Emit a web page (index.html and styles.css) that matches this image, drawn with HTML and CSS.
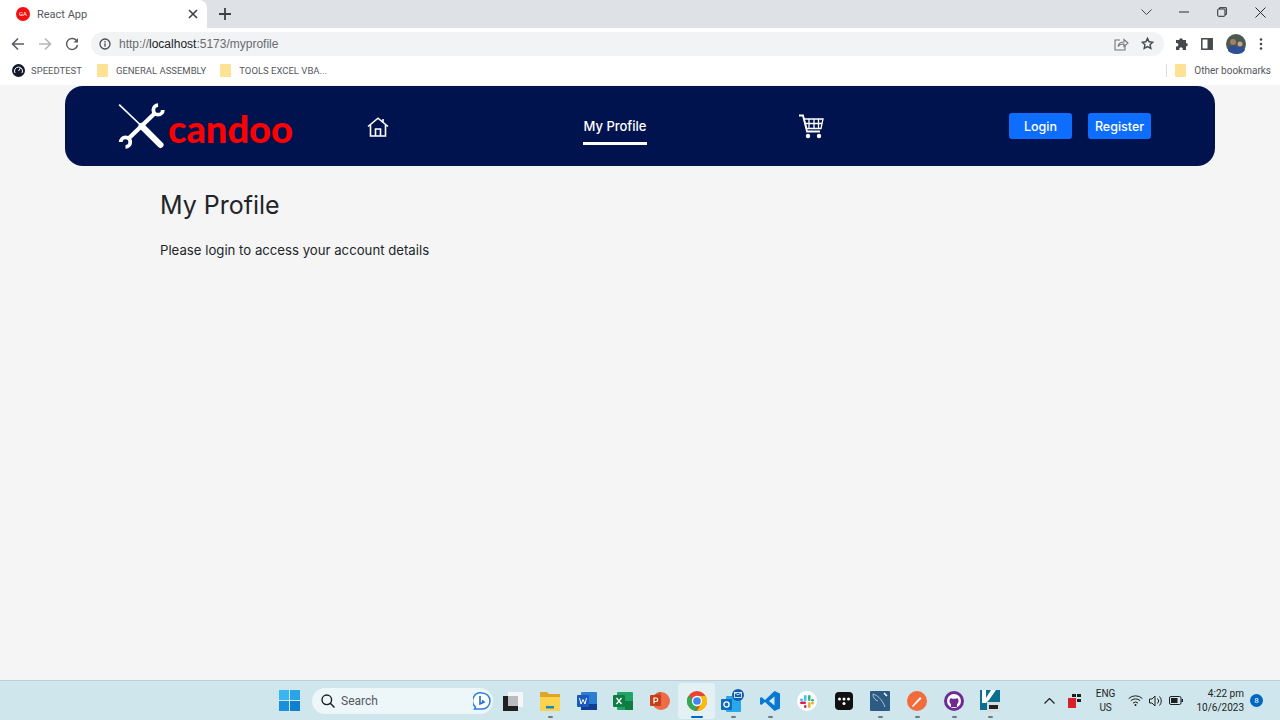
FILE: index.html
```html
<!DOCTYPE html>
<html lang="en">
<head>
  <meta charset="UTF-8">
  <meta name="viewport" content="width=device-width, initial-scale=1.0">
  <title>React App</title>
  <link rel="stylesheet" href="styles.css">
</head>
<body>
  <!-- Tab strip -->
  <div class="tabstrip">
    <div class="tab">
      <span class="favicon">GA</span>
      <span class="tab-title">React App</span>
      <svg class="tab-close" width="10" height="10" viewBox="0 0 10 10"><path d="M1 1l8 8M9 1l-8 8" stroke="#3c4043" stroke-width="1.6"/></svg>
    </div>
    <svg class="new-tab" width="12" height="12" viewBox="0 0 12 12"><path d="M6 0v12M0 6h12" stroke="#3c4043" stroke-width="1.8"/></svg>
    <div class="window-controls">
      <svg class="win-chevron" width="11" height="6" viewBox="0 0 11 6"><path d="M.5.5l5 5 5-5" fill="none" stroke="#45484c"/></svg>
      <svg class="win-min" width="10" height="2" viewBox="0 0 10 2"><path d="M0 1h10" stroke="#2a2c2e"/></svg>
      <svg class="win-max" width="10" height="10" viewBox="0 0 10 10"><path d="M2.5 2V.7h6.8v6.8H8" fill="none" stroke="#2a2c2e"/><rect x=".7" y="2" width="7.3" height="7.3" rx="1" fill="none" stroke="#2a2c2e"/></svg>
      <svg class="win-close" width="11" height="11" viewBox="0 0 11 11"><path d="M.5.5l10 10M10.5.5l-10 10" stroke="#2a2c2e"/></svg>
    </div>
  </div>

  <!-- Address bar -->
  <div class="toolbar">
    <svg class="tool-btn" width="14" height="14" viewBox="0 0 14 14"><path d="M13 7H2M7 1.5L1.5 7 7 12.5" fill="none" stroke="#5a5d61" stroke-width="1.6"/></svg>
    <svg class="tool-btn" width="14" height="14" viewBox="0 0 14 14"><path d="M1 7h11M7 1.5L12.5 7 7 12.5" fill="none" stroke="#b4b6b9" stroke-width="1.6"/></svg>
    <svg class="tool-btn" width="14" height="14" viewBox="0 0 14 14"><path d="M12 4.500A5.500 5.500 0 1 0 12.500 8" fill="none" stroke="#5a5d61" stroke-width="1.5"/><path d="M13 1v4.500H8.500z" fill="#5a5d61"/></svg>
    <div class="omnibox">
      <svg width="12" height="12" viewBox="0 0 12 12"><circle cx="6" cy="6" r="5" fill="none" stroke="#4a4d51" stroke-width="1.3"/><path d="M6 5.200v3.600M6 3v1.400" stroke="#4a4d51" stroke-width="1.3"/></svg>
      <span class="url">http://<b>localhost</b>:5173/myprofile</span>
      <svg class="omni-share" width="15" height="14" viewBox="0 0 15 14"><path d="M6 3H1v10h10V9" fill="none" stroke="#73767a" stroke-width="1.1"/><path d="M4 9.500C4.500 6.500 7 5 10 5V2.500l4 3.500-4 3.500V7C8 7 5.500 7.500 4 9.500z" fill="none" stroke="#73767a" stroke-width="1.1"/></svg>
      <svg class="omni-star" width="13" height="13" viewBox="0 0 24 24"><path d="M12 2.500l2.900 6.300 6.900.8-5.100 4.700 1.400 6.800-6.100-3.400-6.100 3.400 1.400-6.800-5.100-4.700 6.900-.8z" fill="none" stroke="#45484c" stroke-width="2.6"/></svg>
    </div>
    <div class="toolbar-right">
      <svg width="14" height="14" viewBox="0 0 14 14"><path d="M1 4h3.200a1.800 1.800 0 1 1 3.600 0H11v3a1.800 1.800 0 1 1 0 3.600V14H7.500a1.800 1.800 0 1 0-3 0H1v-3.500a1.800 1.800 0 1 0 0-3.400z" fill="#45484c" transform="translate(1 -1)"/></svg>
      <svg width="12" height="12" viewBox="0 0 12 12"><rect x=".8" y=".8" width="10.400" height="10.400" fill="none" stroke="#45484c" stroke-width="1.5"/><rect x="6.500" y="1" width="4.500" height="10" fill="#45484c"/></svg>
      <svg width="20" height="20" viewBox="0 0 20 20"><circle cx="10" cy="10" r="10" fill="#4b5a4e"/><path d="M2 17c1-5 4-6 5-6s3 1 4 3l3-3c2 0 4 2 5 5-2 3-5 4-8 4s-7-1-9-3z" fill="#2d4f96"/><circle cx="7" cy="8" r="3" fill="#a97d63"/><circle cx="14" cy="10" r="2.500" fill="#c9a48c"/></svg>
      <svg width="4" height="12" viewBox="0 0 4 12"><circle cx="2" cy="1.500" r="1.300" fill="#45484c"/><circle cx="2" cy="6" r="1.300" fill="#45484c"/><circle cx="2" cy="10.500" r="1.300" fill="#45484c"/></svg>
    </div>
  </div>

  <!-- Bookmarks -->
  <div class="bookmarks">
    <span class="bookmark bookmark-speed">
      <svg width="13" height="13" viewBox="0 0 13 13"><circle cx="6.500" cy="6.500" r="6.500" fill="#14182b"/><path d="M3 9a4 4 0 1 1 7 0" fill="none" stroke="#fff" stroke-width="1"/><path d="M6.500 7l2-3" stroke="#fff"/></svg>
      SPEEDTEST
    </span>
    <span class="bookmark bookmark-ga"><i class="folder"></i>GENERAL ASSEMBLY</span>
    <span class="bookmark bookmark-tools"><i class="folder"></i>TOOLS EXCEL VBA...</span>
    <span class="bookmark bookmark-other"><i class="folder"></i>Other bookmarks</span>
  </div>

  <!-- Page -->
  <main class="page">
    <nav class="navbar">
      <a class="brand" href="#">
        <svg width="54" height="50" viewBox="0 0 54 50">
          <path d="M40 11.500L12 38.500" stroke="#fff" stroke-width="4.500"/>
          <path d="M2.300 2.300L26 25" stroke="#00134f" stroke-width="4"/>
          <path d="M2.300 2.300L26 25" stroke="#fff" stroke-width="1.800"/>
          <path d="M26 25L46 45" stroke="#fff" stroke-width="6.500" stroke-linecap="round"/>
          <path d="M43.500 3A5 5 0 1 0 48.500 8" fill="none" stroke="#fff" stroke-width="4"/>
          <path d="M9 47A5 5 0 1 0 4 42" fill="none" stroke="#fff" stroke-width="4"/>
        </svg>
        <span class="brand-name">candoo</span>
      </a>
      <a class="nav-home" href="#">
        <svg width="22" height="21" viewBox="0 0 22 21"><path d="M1 10.500L11 2.200l10 8.300M3.500 9v11h15V9M8.500 20v-7h5v7M16 3v3.500" fill="none" stroke="#fff" stroke-width="1.600"/></svg>
      </a>
      <a class="nav-link" href="#">My Profile</a>
      <a class="nav-cart" href="#">
        <svg width="26" height="25" viewBox="0 0 26 25"><path d="M1 1.500h4l4 16h13" fill="none" stroke="#fff" stroke-width="1.8"/><path d="M6 5h19l-2 9.500H8.500zM11 5v9.500M16 5v9.500M20.500 5v9.500M7 9.500h17" fill="none" stroke="#fff" stroke-width="1.3"/><circle cx="10" cy="22" r="2.200" fill="#fff"/><circle cx="21" cy="22" r="2.200" fill="#fff"/></svg>
      </a>
      <div class="nav-actions">
        <button class="btn">Login</button>
        <button class="btn">Register</button>
      </div>
    </nav>
    <section class="content">
      <h1>My Profile</h1>
      <p>Please login to access your account details</p>
    </section>
  </main>

  <!-- Taskbar -->
  <footer class="taskbar">
    <svg class="start" width="21" height="21" viewBox="0 0 21 21"><rect width="10" height="10" fill="#38b6f2"/><rect x="11" width="10" height="10" fill="#2aa4e8"/><rect y="11" width="10" height="10" fill="#1a8fdc"/><rect x="11" y="11" width="10" height="10" fill="#0f7fd0"/></svg>
    <div class="search">
      <svg width="14" height="14" viewBox="0 0 14 14"><circle cx="5.800" cy="5.800" r="4.800" fill="none" stroke="#1d1f21" stroke-width="1.4"/><path d="M9.300 9.300L13.500 13.500" stroke="#1d1f21" stroke-width="1.5"/></svg>
      <span>Search</span>
      <svg class="bing" width="18" height="18" viewBox="0 0 18 18"><path d="M9 1a8 8 0 0 1 0 16H1.500l1-2A8 8 0 0 1 9 1z" fill="#fff" stroke="#2a7de1" stroke-width="1.5"/><path d="M7 4v8l4-2-2-1.500" fill="none" stroke="#1d6fd0" stroke-width="1.6"/></svg>
    </div>
    <div class="task-icons">
      <span class="task-icon">
        <svg width="20" height="20" viewBox="0 0 20 20"><rect x="5" y="1" width="15" height="15" fill="#f4f6f7"/><rect y="5" width="15" height="15" fill="#202020"/><rect x="5" y="5" width="10" height="10" fill="#b9bdbf"/></svg>
      </span>
      <span class="task-icon running">
        <svg width="22" height="20" viewBox="0 0 22 20"><path d="M1 1h7l2 2h11v5H1z" fill="#e0a526"/><path d="M1 6h20v14H1z" fill="#fcd34d"/><rect x="7" y="15" width="8" height="2.500" fill="#1583c9"/></svg>
      </span>
      <span class="task-icon">
        <svg width="20" height="20" viewBox="0 0 20 20"><rect x="4" y="1" width="16" height="18" rx="1" fill="#2b7cd3"/><rect x="4" y="13" width="16" height="6" fill="#103f91"/><rect x="0" y="4" width="12" height="12" rx="1" fill="#185abd"/><path d="M2.500 7l1.500 6 2-4.500 2 4.500 1.500-6" fill="none" stroke="#fff"/></svg>
      </span>
      <span class="task-icon">
        <svg width="20" height="20" viewBox="0 0 20 20"><rect x="4" y="1" width="16" height="18" rx="1" fill="#21a366"/><rect x="12" y="10" width="8" height="9" fill="#107c41"/><rect x="0" y="4" width="12" height="12" rx="1" fill="#107c41"/><path d="M3.500 7l5 6M8.500 7l-5 6" stroke="#fff" stroke-width="1.3"/></svg>
      </span>
      <span class="task-icon">
        <svg width="20" height="20" viewBox="0 0 20 20"><circle cx="11" cy="10" r="9" fill="#ed6c47"/><path d="M11 1a9 9 0 0 0-9 9h9z" fill="#d35230"/><rect y="4" width="11" height="11" rx="1" fill="#c43e1c"/><path d="M4 12.500V7h2a1.500 1.500 0 0 1 0 3.500H4" fill="none" stroke="#fff" stroke-width="1.2"/></svg>
      </span>
      <span class="task-icon active">
        <svg width="20" height="20" viewBox="0 0 20 20"><circle cx="10" cy="10" r="10" fill="#ea4335"/><path d="M10 10L1.300 5A10 10 0 0 0 10 20z" fill="#34a853"/><path d="M10 5h8.700A10 10 0 0 1 10 20l4-7z" fill="#fbbc05"/><circle cx="10" cy="10" r="4.500" fill="#4285f4" stroke="#fff" stroke-width="1.3"/></svg>
      </span>
      <span class="task-icon running">
        <svg width="24" height="24" viewBox="0 0 24 24"><rect x="5" y="7" width="15" height="16" rx="1" fill="#28a8ea"/><rect x="0" y="10" width="11" height="11" rx="1" fill="#0f6cbd"/><circle cx="5.500" cy="15.500" r="2.600" fill="none" stroke="#fff" stroke-width="1.3"/><circle cx="17" cy="6" r="6" fill="#0f5cad"/><rect x="13.500" y="3.500" width="7" height="5" fill="none" stroke="#fff" stroke-width=".8"/><path d="M13.500 3.500l3.500 2.500 3.500-2.500" fill="none" stroke="#fff" stroke-width=".8"/></svg>
      </span>
      <span class="task-icon running">
        <svg width="20" height="20" viewBox="0 0 20 20"><path d="M14.500 0L20 2.500v15L14.500 20 5 11l-3.500 3L0 13V7l1.500-1L5 9z" fill="#0a78cf"/><path d="M14.500 5.500L9 10l5.500 4.500z" fill="#cfe9f7"/></svg>
      </span>
      <span class="task-icon">
        <svg width="20" height="20" viewBox="0 0 20 20"><circle cx="10" cy="10" r="10" fill="#fff"/><rect x="11" y="4" width="2.500" height="6" rx="1.200" fill="#2eb67d"/><rect x="14" y="8" width="3" height="2.500" rx="1.200" fill="#2eb67d"/><rect x="3" y="10.500" width="6" height="2.500" rx="1.200" fill="#e01e5a"/><rect x="7" y="14" width="2.500" height="3" rx="1.200" fill="#e01e5a"/><rect x="7" y="4" width="2.500" height="6" rx="1.200" fill="#36c5f0"/><rect x="3" y="7.500" width="3" height="2.500" rx="1.200" fill="#36c5f0"/><rect x="11" y="11" width="2.500" height="6" rx="1.200" fill="#ecb22e"/><rect x="14" y="11" width="3" height="2.500" rx="1.200" fill="#ecb22e"/></svg>
      </span>
      <span class="task-icon">
        <svg width="18" height="18" viewBox="0 0 18 18"><rect width="18" height="18" rx="4" fill="#111"/><g fill="#fff"><circle cx="4.500" cy="7" r="1.500"/><circle cx="9" cy="7" r="1.500"/><circle cx="13.500" cy="7" r="1.500"/><circle cx="9" cy="11.500" r="1.500"/></g></svg>
      </span>
      <span class="task-icon running">
        <svg width="20" height="20" viewBox="0 0 20 20"><rect width="20" height="20" rx="1" fill="#2c5a82"/><path d="M3 3c4 1 9 5 12 13M3 3c0 4 2 6 5 7" fill="none" stroke="#b5cfe0" stroke-width=".9"/><path d="M14 2l3 3" stroke="#fff" stroke-width="1.5"/></svg>
      </span>
      <span class="task-icon running">
        <svg width="20" height="20" viewBox="0 0 20 20"><circle cx="10" cy="10" r="10" fill="#f26b3a"/><path d="M5 15l8-9 1.500 1.500L6 16z" fill="#fff"/></svg>
      </span>
      <span class="task-icon running">
        <svg width="20" height="20" viewBox="0 0 20 20"><circle cx="10" cy="10" r="10" fill="#6e2a93"/><circle cx="10" cy="10" r="7" fill="#fff"/><path d="M7 16v-3c-2-1-2-5 0-6l1 .7h4l1-.7c2 1 2 5 0 6v3z" fill="#6e2a93"/></svg>
      </span>
      <span class="task-icon running">
        <svg width="20" height="22" viewBox="0 0 20 22"><rect width="20" height="20" fill="#0b6f8f"/><path d="M2 0h4v8l5-8h5l-7 10-3 3H2z" fill="#fff"/><rect x="7" y="12" width="13" height="10" fill="#d9dde0"/><rect x="9" y="15" width="9" height="4" fill="#222"/></svg>
      </span>
    </div>
    <div class="tray">
      <svg width="11" height="6" viewBox="0 0 11 6"><path d="M.5 5.500l5-5 5 5" fill="none" stroke="#1d1f21" stroke-width="1.2"/></svg>
      <svg class="tray-dropbox" width="13" height="14" viewBox="0 0 13 14"><rect y="4" width="8" height="10" fill="#d81f2a"/><g fill="#1d1f21"><rect x="4" width="4" height="3"/><rect x="9" width="4" height="3"/><rect x="9" y="5" width="4" height="3"/></g></svg>
      <div class="lang">ENG<br>US</div>
      <svg width="15" height="11" viewBox="0 0 15 11"><path d="M.7 3.500a10 10 0 0 1 13.600 0M2.800 5.700a7 7 0 0 1 9.400 0M5 8a4 4 0 0 1 5 0" fill="none" stroke="#1d1f21"/><circle cx="7.500" cy="10" r="1" fill="#1d1f21"/></svg>
      <svg width="14" height="12" viewBox="0 0 14 12"><path d="M.5 4v4h2.500l3 3V1L3 4zM8.500 3.500a3.500 3.500 0 0 1 0 5M10.500 1.500a6.500 6.500 0 0 1 0 9" fill="none" stroke="#1d1f21"/></svg>
      <svg width="14" height="9" viewBox="0 0 14 9"><rect x=".5" y=".5" width="11.500" height="8" rx="1.500" fill="none" stroke="#1d1f21"/><rect x="2" y="2" width="6.500" height="5" fill="#1d1f21"/><rect x="12.500" y="3" width="1.500" height="3" fill="#1d1f21"/></svg>
      <div class="clock">4:22 pm<br>10/6/2023</div>
      <span class="notify">8</span>
    </div>
  </footer>
</body>
</html>
```

FILE: styles.css
```css
* {
  box-sizing: border-box;
}

html, body {
  height: 100%;
}

body {
  margin: 0;
  display: flex;
  flex-direction: column;
  height: 720px;
  overflow: hidden;
  font-family: "Inter", "Liberation Sans", sans-serif;
  background-color: #f5f5f5;
  color: #212529;
}

/* Browser chrome */
.tabstrip {
  height: 28px;
  flex: none;
  display: flex;
  align-items: flex-end;
  background-color: #dee1e6;
}

.tab {
  width: 207px;
  height: 28px;
  display: flex;
  align-items: center;
  padding: 0 9px 0 16px;
  background-color: #fff;
  border-radius: 0 8px 0 0;
  font-family: "Roboto", sans-serif;
  font-size: 11px;
  color: #55585c;
}

.favicon {
  width: 14px;
  height: 14px;
  margin-right: 7px;
  border-radius: 50%;
  background-color: #f60d0d;
  color: #fff;
  font-size: 6px;
  line-height: 14px;
  text-align: center;
}

.tab-title {
  flex: 1;
}

.new-tab {
  margin: 0 0 8px 12px;
}

.window-controls {
  margin-left: auto;
  align-self: stretch;
  display: flex;
  align-items: center;
  padding: 0 14px 4px 0;
}

.win-chevron {
  margin-right: 27px;
}

.win-min {
  margin-right: 28px;
}

.win-max {
  margin-right: 28px;
}

.toolbar {
  height: 30px;
  flex: none;
  display: flex;
  align-items: center;
  padding: 1px 0 0 11px;
  background-color: #fff;
}

.tool-btn {
  margin-right: 13px;
}

.omnibox {
  width: 1073px;
  height: 24px;
  margin-left: -1px;
  display: flex;
  align-items: center;
  padding: 0 8px;
  border-radius: 12px;
  background-color: #f1f3f4;
}

.url {
  margin-left: 8px;
  font-family: "Liberation Sans", sans-serif;
  font-size: 12px;
  color: #686b6f;
}

.url b {
  font-weight: normal;
  color: #202124;
}

.omni-share {
  margin-left: auto;
  margin-right: 12px;
}

.omni-star {
  margin-right: 2px;
}

.toolbar-right {
  flex: 1;
  display: flex;
  align-items: center;
  gap: 13px;
  padding-left: 10px;
}

.bookmarks {
  height: 27px;
  flex: none;
  display: flex;
  align-items: center;
  padding: 0 9px 2px 12px;
  background-color: #fff;
  font-family: "Roboto", sans-serif;
  font-size: 9.5px;
  color: #55585c;
}

.bookmark {
  display: flex;
  align-items: center;
  gap: 7px;
}

.bookmark-speed {
  gap: 6px;
}

.bookmark-ga {
  margin-left: 15px;
}

.bookmark-tools {
  margin-left: 14px;
}

.bookmark-other {
  margin-left: auto;
  padding-left: 8px;
  border-left: 1px solid #dadce0;
  font-size: 10px;
}

.folder {
  width: 11px;
  height: 13px;
  margin-right: 1px;
  border-radius: 1px;
  background-color: #fde293;
}

/* App page */
.page {
  flex: 1;
  min-height: 0;
  padding: 1px 65px 0;
  background-color: #f5f5f5;
}

.navbar {
  height: 80px;
  display: flex;
  align-items: center;
  padding-left: 52px;
  border-radius: 18px;
  background-color: #00134f;
}

.navbar a {
  text-decoration: none;
}

.brand {
  width: 176px;
  display: flex;
  align-items: flex-start;
}

.brand-name {
  margin: 5px 0 0 0;
  font-family: "Lato", sans-serif;
  font-weight: 900;
  font-size: 38px;
  line-height: 44px;
  color: #ff0000;
}

.nav-home {
  margin-left: 74px;
  display: flex;
}

.nav-link {
  width: 64px;
  height: 38px;
  margin-left: 194px;
  padding-top: 2px;
  display: flex;
  align-items: center;
  justify-content: center;
  white-space: nowrap;
  border-bottom: 3px solid #fff;
  font-size: 13px;
  font-weight: 500;
  color: #fff;
}

.nav-cart {
  margin-left: 151px;
  display: flex;
}

.nav-actions {
  margin-left: 185px;
  display: flex;
  gap: 16px;
}

.btn {
  width: 63px;
  height: 26px;
  padding: 0;
  border: none;
  border-radius: 3px;
  background-color: #0d6efd;
  color: #fff;
  font-family: inherit;
  font-size: 12.5px;
  font-weight: 500;
}

.content {
  padding: 24px 0 0 95px;
}

h1 {
  margin: 0 0 20px;
  font-size: 25px;
  font-weight: 400;
  line-height: 30px;
}

.content p {
  margin: 0;
  font-size: 13.2px;
  font-weight: 400;
  line-height: 20px;
}

/* Windows taskbar */
.taskbar {
  height: 40px;
  flex: none;
  display: flex;
  align-items: center;
  padding-left: 279px;
  border-top: 1px solid #b9d0d6;
  background-color: #cfe6ed;
  font-family: "Roboto", sans-serif;
  color: #1d1f21;
}

.start {
  margin-right: 12px;
}

.search {
  width: 181px;
  height: 26px;
  display: flex;
  align-items: center;
  padding: 0 2px 0 9px;
  border-radius: 13px;
  background-color: #edf6f9;
  font-size: 12px;
  color: #55585c;
}

.search span {
  margin-left: 6px;
}

.bing {
  margin-left: auto;
}

.task-icons {
  display: flex;
  margin-left: 2px;
}

.task-icon {
  position: relative;
  width: 36.7px;
  height: 36px;
  display: flex;
  align-items: center;
  justify-content: center;
}

.task-icon.running::after,
.task-icon.active::after {
  content: "";
  position: absolute;
  bottom: 1px;
  left: 50%;
  width: 5px;
  height: 2px;
  margin-left: -2px;
  border-radius: 1px;
  background-color: #75797c;
}

.task-icon.active {
  border-radius: 3px;
  background-color: #e3f1f5;
}

.task-icon.active::after {
  width: 12px;
  margin-left: -6px;
  background-color: #0067c0;
}

.tray {
  margin-left: auto;
  display: flex;
  align-items: center;
  padding-right: 17px;
  font-size: 10px;
  line-height: 14px;
  text-align: center;
}

.tray-dropbox {
  margin-left: 13px;
}

.lang {
  margin: 0 13px 0 15px;
}

.tray > svg:nth-of-type(n+3) {
  margin-right: 6px;
}

.clock {
  margin-left: 7px;
  text-align: right;
}

.notify {
  width: 13px;
  height: 13px;
  margin-left: 6px;
  border-radius: 50%;
  background-color: #0067c0;
  color: #fff;
  font-size: 8px;
  line-height: 13px;
}
```
